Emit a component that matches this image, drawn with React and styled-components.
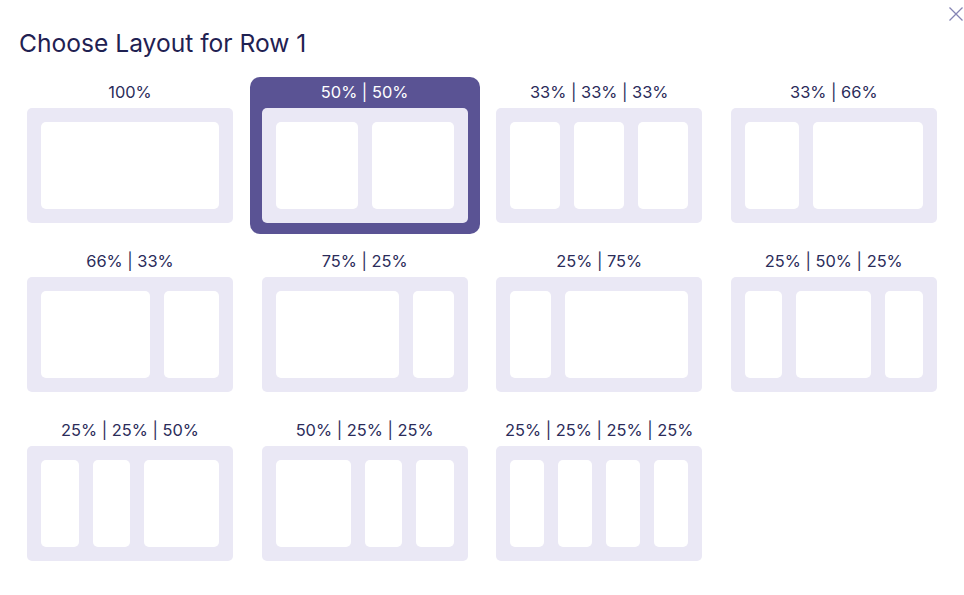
import React from "react";
import styled, { createGlobalStyle } from "styled-components";

const Global = createGlobalStyle`
  html, body { margin: 0; padding: 0; background: #ffffff; }
  body { font-family: Inter, "Noto Sans", sans-serif; }
`;

const Modal = styled.div`
  position: relative;
  width: 964px;
  height: 595px;
  box-sizing: border-box;
  padding: 26px 0 0 15px;
  background: #ffffff;
`;

const Title = styled.h1`
  margin: 0 0 16px 4px;
  font-size: 24.6px;
  line-height: 35px;
  font-weight: 400;
  color: #1f2152;
`;

const Close = styled.button`
  position: absolute;
  top: 6px;
  right: 0px;
  width: 16px;
  height: 16px;
  padding: 0;
  border: 0;
  background: none;
  cursor: pointer;
  display: flex;
`;

const Grid = styled.div`
  display: grid;
  grid-template-columns: repeat(4, 230px);
  column-gap: 4.6px;
  row-gap: 12px;
`;

const Option = styled.div`
  display: flex;
  flex-direction: column;
  align-items: stretch;
  padding: 0 12px 11px;
  border-radius: 10px;
  background: ${(p) => (p.$selected ? "#5a5394" : "transparent")};
  cursor: pointer;
`;

const Label = styled.div`
  height: 31px;
  display: flex;
  align-items: center;
  justify-content: center;
  font-size: 16.4px;
  font-weight: 400;
  color: ${(p) => (p.$selected ? "#ffffff" : "#2b2c5a")};
  padding-bottom: 1px;
  box-sizing: border-box;
`;

const Preview = styled.div`
  height: 115px;
  box-sizing: border-box;
  padding: 14px;
  display: flex;
  gap: 14px;
  background: #eae8f5;
  border-radius: 5px;
`;

const Col = styled.div`
  flex: ${(p) => p.$w} 1 0;
  background: #ffffff;
  border-radius: 5px;
`;

const layouts = [
  [100],
  [50, 50],
  [33, 33, 33],
  [33, 66],
  [66, 33],
  [75, 25],
  [25, 75],
  [25, 50, 25],
  [25, 25, 50],
  [50, 25, 25],
  [25, 25, 25, 25],
];

export default function App() {
  return (
    <>
      <Global />
      <Modal>
        <Close aria-label="Close">
          <svg width="16" height="16" viewBox="0 0 16 16">
            <path d="M1.5 1.5 L14.5 14.5 M14.5 1.5 L1.5 14.5" stroke="#8584b4" strokeWidth="1.3" fill="none" />
          </svg>
        </Close>
        <Title>Choose Layout for Row 1</Title>
        <Grid>
          {layouts.map((cols, i) => {
            const selected = i === 1;
            return (
              <Option key={i} $selected={selected}>
                <Label $selected={selected}>{cols.map((c) => `${c}%`).join(" | ")}</Label>
                <Preview>
                  {cols.map((c, j) => (
                    <Col key={j} $w={c} />
                  ))}
                </Preview>
              </Option>
            );
          })}
        </Grid>
      </Modal>
    </>
  );
}
